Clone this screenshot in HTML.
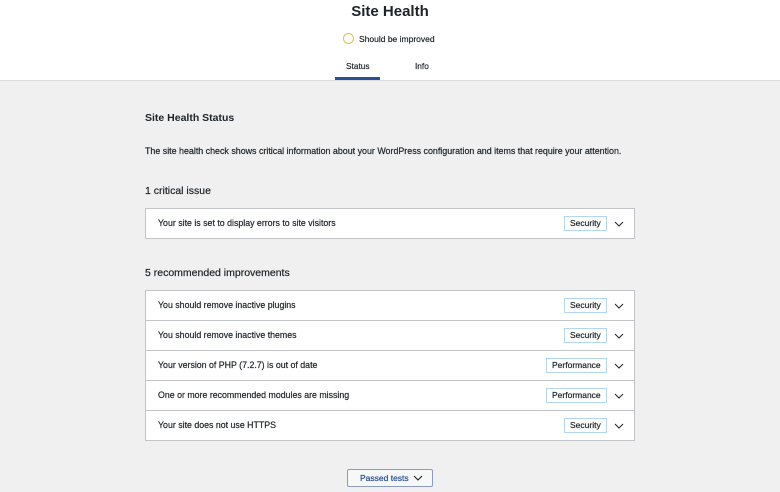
<!DOCTYPE html>
<html><head><style>
body{margin:0;width:780px;height:492px;background:#f0f0f1;font-family:"Liberation Sans",sans-serif;color:#1d2327;overflow:hidden;position:relative;-webkit-text-stroke:0.2px #1d2327}
.hdr{position:absolute;left:0;top:0;width:780px;height:80px;background:#fff;border-bottom:1px solid #dcdcde}
.abs{position:absolute}
.row{position:absolute;left:145px;width:488px;height:29px;background:#fff;border:1px solid #c3c4c7;font-size:8.8px}
.row span.t{position:absolute;left:12px;top:9px}
.badge{position:absolute;top:7px;line-height:13px;border:1px solid #b5d6f0;font-size:8.5px;padding:0 5px;box-sizing:border-box;height:15px}
.chev{position:absolute;right:10px;top:12px;width:10px;height:6px}
</style></head><body>
<div class="hdr">
<div class="abs" style="left:0;width:780px;top:3px;text-align:center;font-size:15px;font-weight:bold;-webkit-text-stroke:0">Site Health</div>
<div class="abs" style="left:343px;top:33px;width:9px;height:9px;border:1.5px solid #f0b849;border-radius:50%"></div>
<div class="abs" style="left:359px;top:34px;font-size:8.5px">Should be improved</div>
<div class="abs" style="left:346px;top:61px;font-size:8.3px">Status</div>
<div class="abs" style="left:415px;top:61px;font-size:8.3px">Info</div>
<div class="abs" style="left:335px;top:77px;width:45px;height:3px;background:#2c4f93"></div>
</div>
<div class="abs" style="left:145px;top:112px;font-size:10.5px;font-weight:bold;-webkit-text-stroke:0">Site Health Status</div>
<div class="abs" style="left:145px;top:146px;font-size:8.9px">The site health check shows critical information about your WordPress configuration and items that require your attention.</div>
<div class="abs" style="left:145px;top:185px;font-size:10.5px">1 critical issue</div>
<div class="abs" style="left:145px;top:267px;font-size:10.5px">5 recommended improvements</div>
<div class="row" style="top:208px"><span class="t">Your site is set to display errors to site visitors</span><span class="badge" style="left:418px">Security</span><svg class="chev" viewBox="0 0 10 6"><path d="M1 1l4 4 4-4" fill="none" stroke="#1d2327" stroke-width="1"/></svg></div>
<div class="row" style="top:290px"><span class="t">You should remove inactive plugins</span><span class="badge" style="left:418px">Security</span><svg class="chev" viewBox="0 0 10 6"><path d="M1 1l4 4 4-4" fill="none" stroke="#1d2327" stroke-width="1"/></svg></div>
<div class="row" style="top:320px"><span class="t">You should remove inactive themes</span><span class="badge" style="left:418px">Security</span><svg class="chev" viewBox="0 0 10 6"><path d="M1 1l4 4 4-4" fill="none" stroke="#1d2327" stroke-width="1"/></svg></div>
<div class="row" style="top:350px"><span class="t">Your version of PHP (7.2.7) is out of date</span><span class="badge" style="left:400px">Performance</span><svg class="chev" viewBox="0 0 10 6"><path d="M1 1l4 4 4-4" fill="none" stroke="#1d2327" stroke-width="1"/></svg></div>
<div class="row" style="top:380px"><span class="t">One or more recommended modules are missing</span><span class="badge" style="left:400px">Performance</span><svg class="chev" viewBox="0 0 10 6"><path d="M1 1l4 4 4-4" fill="none" stroke="#1d2327" stroke-width="1"/></svg></div>
<div class="row" style="top:410px"><span class="t">Your site does not use HTTPS</span><span class="badge" style="left:418px">Security</span><svg class="chev" viewBox="0 0 10 6"><path d="M1 1l4 4 4-4" fill="none" stroke="#1d2327" stroke-width="1"/></svg></div>
<div class="abs" style="left:347px;top:469px;width:84px;height:16px;border:1px solid #8c9bbf;border-radius:2px;background:#f6f7f7;font-size:8.5px;color:#2c4f93;-webkit-text-stroke:0.2px #2c4f93;line-height:16px"><span style="position:absolute;left:12px">Passed tests</span><svg style="position:absolute;left:65px;top:5px" width="10" height="6" viewBox="0 0 10 6"><path d="M1 1l4 4 4-4" fill="none" stroke="#1d2327" stroke-width="1.1"/></svg></div>
</body></html>
